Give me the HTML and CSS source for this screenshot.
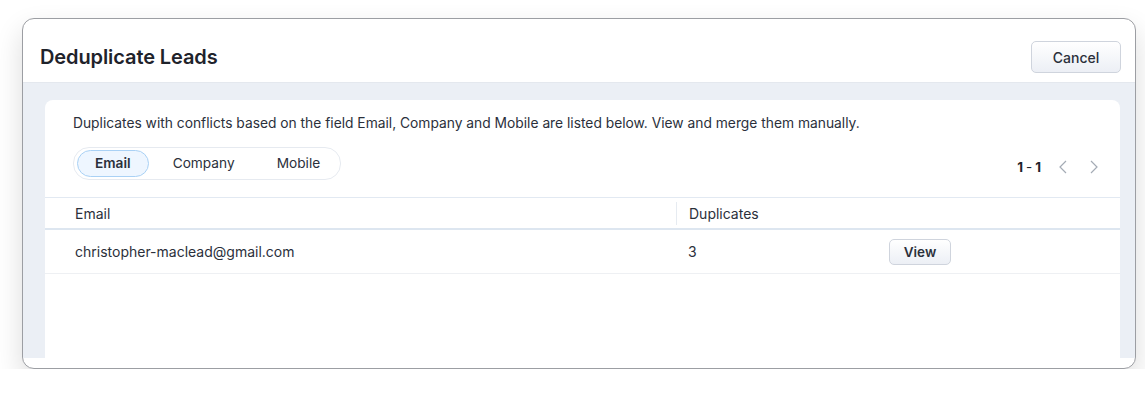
FILE: index.html
```html
<!DOCTYPE html>
<html lang="en">
<head>
  <meta charset="UTF-8">
  <meta name="viewport" content="width=device-width, initial-scale=1">
  <title>Deduplicate Leads</title>
  <link rel="stylesheet" href="styles.css">
</head>
<body>
  <!-- Dialog -->
  <div class="dialog">
    <div class="dialog-header">
      <h1>Deduplicate Leads</h1>
      <button class="btn btn-cancel">Cancel</button>
    </div>

    <div class="dialog-body">
      <div class="card">
        <p class="intro">Duplicates with conflicts based on the field Email, Company and Mobile are listed below. View and merge them manually.</p>

        <div class="toolbar">
          <div class="tabs">
            <span class="tab active">Email</span>
            <span class="tab">Company</span>
            <span class="tab">Mobile</span>
          </div>
          <div class="pager">
            <span class="pager-count">1<span class="dash">-</span>1</span>
            <svg class="chev" width="10" height="14" viewBox="0 0 10 14"><polyline points="8,1 2,7 8,13" /></svg>
            <svg class="chev" width="10" height="14" viewBox="0 0 10 14"><polyline points="2,1 8,7 2,13" /></svg>
          </div>
        </div>

        <div class="table">
          <div class="row head">
            <div class="cell">Email</div>
            <div class="cell divided">Duplicates</div>
            <div class="cell"></div>
          </div>
          <div class="row">
            <div class="cell">christopher-maclead@gmail.com</div>
            <div class="cell">3</div>
            <div class="cell"><button class="btn btn-view">View</button></div>
          </div>
        </div>
      </div>
    </div>
    <div class="dialog-foot"></div>
  </div>
</body>
</html>
```

FILE: styles.css
```css
/* Reset */
*, *::before, *::after {
  margin: 0;
  padding: 0;
  box-sizing: border-box;
}
body {
  font-family: 'Inter', 'Noto Sans', sans-serif;
  background: #fff;
  color: #2b303b;
  padding: 18px 0 0 22px;
}
/* Dialog */
.dialog {
  width: 1114px;
  height: 351px;
  border: 1px solid #9c9ea3;
  border-radius: 12px;
  background: #fff;
  overflow: hidden;
  display: flex;
  flex-direction: column;
  box-shadow: 0 12px 28px rgba(0,0,0,0.14);
}
.dialog-header {
  height: 64px;
  flex: none;
  display: flex;
  align-items: flex-end;
  justify-content: space-between;
  padding: 0 14px 9px 17px;
  border-bottom: 1px solid #e4e8ee;
}
.dialog-header h1 {
  font-size: 20px;
  font-weight: 600;
  line-height: 32px;
  color: #1f232b;
  letter-spacing: -0.1px;
}
.btn {
  font-family: inherit;
  color: #2b303b;
  background: linear-gradient(#ffffff, #eceff5);
  border: 1px solid #cfd4dd;
  border-radius: 5px;
  cursor: pointer;
}
.btn-cancel {
  width: 90px;
  height: 32px;
  font-size: 14px;
  font-weight: 500;
}
/* Body */
.dialog-body {
  flex: 1;
  background: #ebeff5;
  padding: 17px 15px 0 22px;
  display: flex;
}
.dialog-foot {
  height: 10px;
  flex: none;
}
.card {
  flex: 1;
  background: #fff;
  border-radius: 8px 8px 0 0;
}
.intro {
  font-size: 13.8px;
  line-height: 20px;
  padding: 13px 0 0 28px;
}
.toolbar {
  display: flex;
  align-items: center;
  justify-content: space-between;
  padding: 14px 21px 17px 28px;
}
.tabs {
  display: flex;
  gap: 6px;
  padding: 2px 2px 2px 3px;
  border: 1px solid #e6eaf0;
  border-radius: 16px;
}
.tab {
  height: 27px;
  line-height: 25px;
  padding: 0 17px;
  font-size: 13.7px;
  border: 1px solid transparent;
  border-radius: 14px;
}
.tab.active {
  background: #eef6ff;
  border-color: #a9d1f5;
  font-weight: 600;
}
.pager {
  display: flex;
  align-items: center;
  gap: 21px;
  padding-top: 6px;
}
.pager-count {
  font-size: 13.5px;
  font-weight: 700;
  color: #1f232b;
  margin-right: -4px;
}
.pager-count .dash {
  font-weight: 400;
  margin: 0 3px;
}
.chev polyline {
  fill: none;
  stroke: #a4abb5;
  stroke-width: 1.2;
}
/* Table */
.table {
  border-top: 1px solid #e2e9f2;
}
.row {
  display: grid;
  grid-template-columns: 631px 201px 1fr;
  align-items: center;
  height: 44px;
  border-bottom: 1px solid #eef0f3;
  font-size: 14px;
}
.row.head {
  height: 32px;
  border-bottom: 2px solid #dde6f0;
}
.cell {
  padding-left: 12px;
}
.cell:first-child {
  padding-left: 30px;
}
.cell.divided {
  border-left: 1px solid #e6ebf1;
  height: 23px;
  line-height: 23px;
}
.btn-view {
  width: 62px;
  height: 26px;
  font-size: 13.5px;
  font-weight: 600;
}
```
